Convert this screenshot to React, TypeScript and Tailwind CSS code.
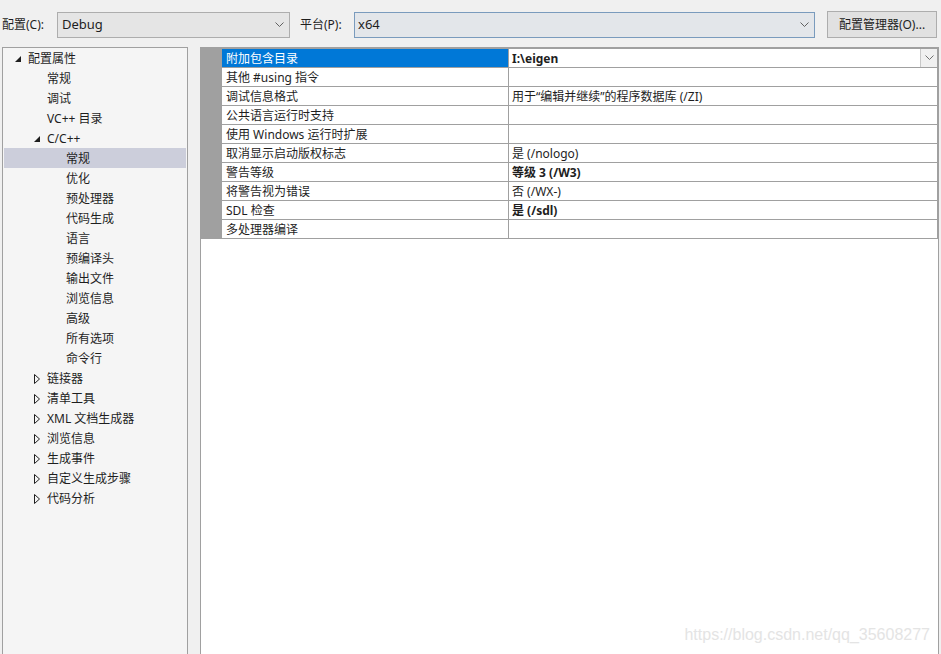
import React from "react";

const font = { fontFamily: '"Noto Sans", "Noto Sans CJK SC", sans-serif' };

type TreeItem = { label: string; level: number; state?: "open" | "closed"; selected?: boolean };

const tree: TreeItem[] = [
  { label: "配置属性", level: 0, state: "open" },
  { label: "常规", level: 1 },
  { label: "调试", level: 1 },
  { label: "VC++ 目录", level: 1 },
  { label: "C/C++", level: 1, state: "open" },
  { label: "常规", level: 2, selected: true },
  { label: "优化", level: 2 },
  { label: "预处理器", level: 2 },
  { label: "代码生成", level: 2 },
  { label: "语言", level: 2 },
  { label: "预编译头", level: 2 },
  { label: "输出文件", level: 2 },
  { label: "浏览信息", level: 2 },
  { label: "高级", level: 2 },
  { label: "所有选项", level: 2 },
  { label: "命令行", level: 2 },
  { label: "链接器", level: 1, state: "closed" },
  { label: "清单工具", level: 1, state: "closed" },
  { label: "XML 文档生成器", level: 1, state: "closed" },
  { label: "浏览信息", level: 1, state: "closed" },
  { label: "生成事件", level: 1, state: "closed" },
  { label: "自定义生成步骤", level: 1, state: "closed" },
  { label: "代码分析", level: 1, state: "closed" },
];

const rows: { name: string; value: string; bold?: boolean }[] = [
  { name: "附加包含目录", value: "I:\\eigen", bold: true },
  { name: "其他 #using 指令", value: "" },
  { name: "调试信息格式", value: "用于“编辑并继续”的程序数据库 (/ZI)" },
  { name: "公共语言运行时支持", value: "" },
  { name: "使用 Windows 运行时扩展", value: "" },
  { name: "取消显示启动版权标志", value: "是 (/nologo)" },
  { name: "警告等级", value: "等级 3 (/W3)", bold: true },
  { name: "将警告视为错误", value: "否 (/WX-)" },
  { name: "SDL 检查", value: "是 (/sdl)", bold: true },
  { name: "多处理器编译", value: "" },
];

function Chevron({ color = "#606060" }: { color?: string }) {
  return (
    <svg width="9" height="6" viewBox="0 0 9 6">
      <path d="M0.5 0.5 L4.5 4.5 L8.5 0.5" fill="none" stroke={color} strokeWidth="1" />
    </svg>
  );
}

function Arrow({ state }: { state?: "open" | "closed" }) {
  if (state === "open")
    return (
      <svg width="6" height="6" viewBox="0 0 6 6">
        <path d="M6 0 L6 6 L0 6 Z" fill="#1e1e1e" />
      </svg>
    );
  if (state === "closed")
    return (
      <svg width="6" height="10" viewBox="0 0 6 10">
        <path d="M0.5 0.5 L5.5 5 L0.5 9.5 Z" fill="none" stroke="#1e1e1e" strokeWidth="1" />
      </svg>
    );
  return null;
}

export default function App() {
  return (
    <div className="w-[941px] h-[654px] bg-[#f0f0f0] overflow-hidden text-[12px] text-[#1e1e1e]" style={font}>
      {/* top bar */}
      <div className="h-[47px] flex items-start pt-[11px]">
        <span className="ml-[2px] w-[55px] mt-[5px]">配置(C):</span>
        <div className="w-[233px] h-[26px] mt-[1px] border border-[#adadad] bg-[#e5e5e5] flex items-center justify-between pl-[4px] pr-[5px]">
          <span className="text-[13px]">Debug</span>
          <Chevron />
        </div>
        <span className="ml-[10px] w-[54px] mt-[5px]">平台(P):</span>
        <div className="w-[461px] h-[26px] mt-[1px] border border-[#7a9bbd] bg-[#e3e6ea] flex items-center justify-between pl-[3px] pr-[5px]">
          <span className="text-[13px]">x64</span>
          <Chevron />
        </div>
        <div className="ml-[12px] w-[110px] h-[27px] border border-[#adadad] bg-[#e1e1e1] flex items-center justify-center">
          配置管理器(O)...
        </div>
      </div>

      {/* main */}
      <div className="flex h-[620px]">
        <div className="ml-[2px] w-[186px] border border-[#a0a0a0] bg-[#f5f5f5]">
          {tree.map((t, i) => (
            <div
              key={i}
              className={`h-[20px] mx-[1px] flex items-center pt-[1px] ${t.selected ? "bg-[#cccedb]" : ""}`}
            >
              <div
                className={`flex items-center justify-center w-[12px] ${
                  t.level === 0 ? "ml-[8px]" : t.level === 1 ? "ml-[27px]" : "ml-[46px]"
                }`}
              >
                <Arrow state={t.state} />
              </div>
              <span className="ml-[4px] whitespace-nowrap">{t.label}</span>
            </div>
          ))}
        </div>

        <div className="relative ml-[12px] w-[739px] border border-[#a0a0a0] bg-white">
          <div className="border-t border-[#a0a0a0]">
            {rows.map((r, i) => (
              <div key={i} className="flex h-[19px] border-b border-[#a0a0a0]">
                <div className="w-[21px] bg-[#a0a0a0]" />
                <div
                  className={`w-[287px] border-r border-[#a0a0a0] pl-[4px] pt-[1px] flex items-center whitespace-nowrap ${
                    i === 0 ? "bg-[#0078d7] text-white" : ""
                  }`}
                >
                  {r.name}
                </div>
                <div className="w-[429px] border-r border-[#a0a0a0] pl-[3px] flex items-center justify-between whitespace-nowrap">
                  <span className={`pt-[1px] ${r.bold ? "font-bold" : ""}`}>{r.value}</span>
                  {i === 0 && (
                    <div className="w-[17px] h-[18px] border-l border-[#c8c8c8] bg-[#f0f0f0] flex items-center justify-center">
                      <Chevron color="#707070" />
                    </div>
                  )}
                </div>
              </div>
            ))}
          </div>
          <div
            className="absolute right-[8px] top-[575px] text-[16px] text-[#e4e4e4] whitespace-nowrap"
            style={{ fontFamily: '"Liberation Sans", Arial, sans-serif' }}
          >
            https://blog.csdn.net/qq_35608277
          </div>
        </div>
      </div>
    </div>
  );
}
